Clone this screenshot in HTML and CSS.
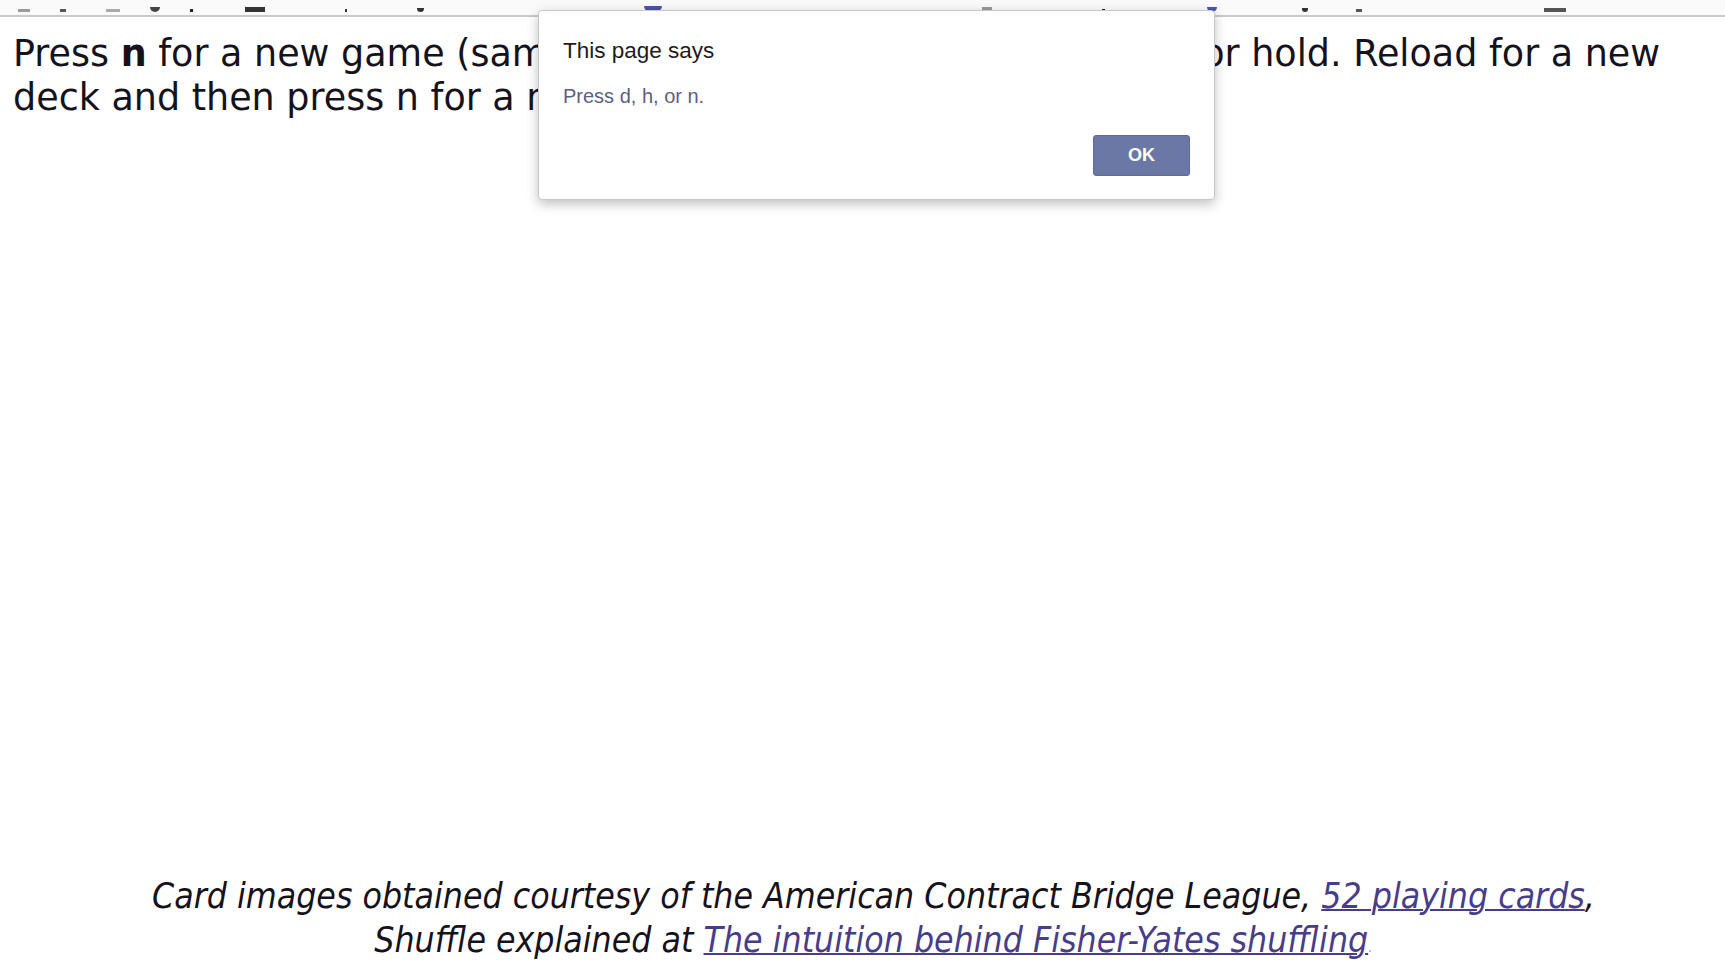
FILE: index.html
```html
<!DOCTYPE html>
<html>
<head>
<meta charset="utf-8">
<title>Blackjack</title>
<link rel="stylesheet" href="styles.css">
</head>
<body>
<div class="page">
  <div class="strip">
    <span class="mk m1"></span><span class="mk m2"></span><span class="mk m3"></span><span class="mk m4"></span>
    <span class="mk m5"></span><span class="mk m6"></span><span class="mk m7"></span><span class="mk m8"></span>
    <span class="mk m9"></span><span class="mk m10"></span><span class="mk m11"></span><span class="mk m12"></span>
    <span class="mk m13"></span><span class="mk m14"></span><span class="mk m15"></span>
  </div>
  <p class="intro">Press <b>n</b> for a new game (same deck), or press d to deal, h to hit, or hold. Reload for a new deck and then press n for a new game.</p>
  <div class="footer">
    <p class="credit">Card images obtained courtesy of the American Contract Bridge League, <a href="#">52 playing cards</a>,<br>Shuffle explained at <a href="#">The intuition behind Fisher-Yates shuffling</a><span class="dot">.</span></p>
  </div>
</div>
<div class="dialog">
  <div class="dlg-title">This page says</div>
  <div class="dlg-msg">Press d, h, or n.</div>
  <div class="dlg-actions"><button class="ok">OK</button></div>
</div>
</body>
</html>
```
FILE: styles.css
```css
html, body {
  margin: 0;
  padding: 0;
  background: #ffffff;
}
.page {
  height: 963px;
  display: flex;
  flex-direction: column;
  overflow: hidden;
}
.strip {
  height: 15px;
  border-bottom: 2px solid #c9c9c9;
  background: #fafafa;
  display: flex;
  align-items: flex-end;
  padding-left: 18px;
  box-sizing: content-box;
}
.mk {
  display: block;
  height: 3px;
  background: #8a8a8a;
  margin-bottom: 3px;
}
.m1 { width: 12px; margin-left: 0; background: #9a9a9a; }
.m2 { width: 6px; margin-left: 30px; background: #555; }
.m3 { width: 14px; margin-left: 40px; background: #aaa; }
.m4 { width: 10px; height: 5px; margin-left: 30px; background: #444; border-radius: 0 0 6px 6px; }
.m5 { width: 3px; margin-left: 30px; background: #222; }
.m6 { width: 20px; height: 5px; margin-left: 52px; background: #333; }
.m7 { width: 2px; margin-left: 80px; background: #333; }
.m8 { width: 7px; height: 4px; margin-left: 70px; background: #333; border-radius: 0 0 4px 4px; }
.m9 { width: 18px; height: 6px; margin-left: 220px; background: #4d54a8; border-radius: 0 0 6px 6px; }
.m10 { width: 10px; height: 5px; margin-left: 320px; background: #999; }
.m11 { width: 3px; margin-left: 110px; background: #222; }
.m12 { width: 10px; height: 5px; margin-left: 102px; background: #4d54a8; border-radius: 0 0 6px 6px; }
.m13 { width: 6px; height: 4px; margin-left: 85px; background: #333; border-radius: 0 0 4px 4px; }
.m14 { width: 6px; margin-left: 48px; background: #555; }
.m15 { width: 22px; height: 4px; margin-left: 182px; background: #555; }

.intro {
  margin: 15px 0 0 0;
  padding: 0 40px 0 13px;
  font-family: "DejaVu Sans", Verdana, sans-serif;
  font-size: 36.5px;
  line-height: 44px;
  color: #15121c;
}
.intro b {
  font-weight: bold;
}
.footer {
  margin-top: auto;
  margin-bottom: -6px;
  padding: 0 0 0 22px;
}
.credit {
  margin: 0;
  text-align: center;
  font-family: "DejaVu Sans Condensed", "DejaVu Sans", sans-serif;
  font-style: italic;
  font-size: 35.3px;
  line-height: 44px;
  color: #15121c;
}
.credit a {
  color: #483d8b;
  text-decoration: underline;
  text-decoration-thickness: 2px;
}
.credit .dot {
  color: #aaa;
  font-size: 16px;
}

.dialog {
  position: absolute;
  left: 538px;
  top: 10px;
  width: 677px;
  height: 190px;
  box-sizing: border-box;
  background: #ffffff;
  border: 1px solid #c8c8cc;
  border-radius: 4px;
  box-shadow: 0 4px 12px rgba(0, 0, 0, 0.25);
  padding: 27px 24px 23px 24px;
  display: flex;
  flex-direction: column;
  font-family: "Liberation Sans", Arial, sans-serif;
}
.dlg-title {
  font-size: 22.5px;
  line-height: 26px;
  color: #1c1c22;
}
.dlg-msg {
  margin-top: 20px;
  font-size: 20px;
  line-height: 24px;
  color: #5b5f82;
}
.dlg-actions {
  margin-top: 27px;
  display: flex;
  justify-content: flex-end;
}
.ok {
  width: 97px;
  height: 41px;
  border: 1px solid #5e6a98;
  border-radius: 3px;
  background: #6b78a6;
  color: #ffffff;
  font-family: "Liberation Sans", Arial, sans-serif;
  font-weight: bold;
  font-size: 18px;
  padding: 0;
}
```
